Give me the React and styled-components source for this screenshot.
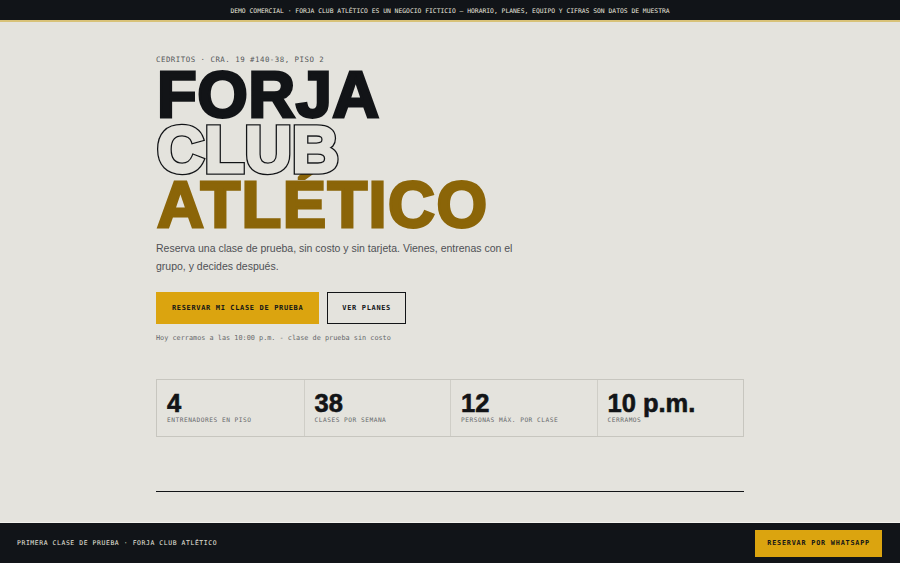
import React from "react"
import styled, { createGlobalStyle } from "styled-components"

const GlobalStyle = createGlobalStyle`
	html, body, #root {
		margin: 0;
		height: 100%;
	}
	body {
		background: #e4e3dd;
		font-family: "Liberation Sans", Arial, sans-serif;
		color: #121417;
	}
	* {
		box-sizing: border-box;
	}
`

const mono = `"DejaVu Sans Mono", "Liberation Mono", monospace`
const paper = "#e4e3dd"
const ink = "#121417"

const PageElement = styled.div`
	height: 100vh;
	display: flex;
	flex-direction: column;
`

const NoticeElement = styled.div`
	height: 22px;
	flex-shrink: 0;
	background: #111418;
	border-bottom: 2px solid #d8c278;
	display: flex;
	align-items: center;
	justify-content: center;
	color: #e8e6df;
	font-family: ${mono};
	font-size: 6.35px;
`

const MainElement = styled.main`
	flex: 1;
	width: 588px;
	margin: 0 auto;
	padding-top: 33px;
	display: flex;
	flex-direction: column;
`

const EyebrowElement = styled.div`
	font-family: ${mono};
	font-size: 7.4px;
	letter-spacing: 0.5px;
	color: #55575a;
	margin-bottom: 3px;
`

const TitleElement = styled.h1`
	margin: 0;
	font-size: 65px;
	font-weight: 700;
	line-height: 55px;
	letter-spacing: 0.5px;
	display: flex;
	flex-direction: column;
	align-items: flex-start;
	padding-left: 1px;
`

const TitleLineElement = styled.span`
	color: ${(props) => props.$color || ink};
	-webkit-text-stroke: 2.8px ${(props) => props.$color || ink};
	letter-spacing: ${(props) => props.$spacing || 0.5}px;
`

const OutlineLineElement = styled.span`
	position: relative;
	color: ${ink};
	-webkit-text-stroke: 5.4px ${ink};

	&::after {
		content: attr(data-text);
		position: absolute;
		left: 0;
		top: 0;
		color: ${paper};
		-webkit-text-stroke: 2.8px ${paper};
	}
`

const LeadElement = styled.p`
	margin: 7px 0 0;
	width: 362px;
	font-size: 10.5px;
	line-height: 18px;
	color: #4f5155;
`

const ActionsElement = styled.div`
	display: flex;
	gap: 8px;
	margin-top: 17px;
`

const ButtonElement = styled.a`
	height: 32px;
	display: flex;
	align-items: center;
	justify-content: center;
	padding: 0 ${(props) => props.$pad || 14}px;
	font-family: ${mono};
	font-size: 7px;
	font-weight: bold;
	letter-spacing: 0.65px;
	color: ${ink};
	background: ${(props) => (props.$primary ? "#dba40f" : "transparent")};
	border: ${(props) => (props.$primary ? "none" : `1.5px solid ${ink}`)};
	text-decoration: none;
`

const NoteElement = styled.div`
	margin-top: 10px;
	font-family: ${mono};
	font-size: 6.85px;
	color: #66686b;
`

const StatsElement = styled.div`
	margin-top: 37px;
	display: grid;
	grid-template-columns: repeat(4, 1fr);
	border: 1px solid #c7c6bf;
	height: 58px;
`

const StatElement = styled.div`
	padding: 10px 10px 0;
	border-left: ${(props) => (props.$first ? "none" : "1px solid #cfcec7")};
`

const StatValueElement = styled.div`
	font-size: 25.5px;
	font-weight: bold;
	line-height: 26px;
	-webkit-text-stroke: 0.6px ${ink};
`

const StatLabelElement = styled.div`
	font-family: ${mono};
	font-size: 6.2px;
	letter-spacing: 0.5px;
	color: #66686b;
`

const RuleElement = styled.hr`
	margin: 54px 0 0;
	border: none;
	border-top: 1.5px solid ${ink};
`

const FooterElement = styled.footer`
	height: 41px;
	flex-shrink: 0;
	background: #111418;
	border-top: 1px solid #f2f1ec;
	display: flex;
	align-items: center;
	justify-content: space-between;
	padding: 0 18px 0 17px;
`

const FooterTextElement = styled.span`
	font-family: ${mono};
	font-size: 6.4px;
	letter-spacing: 0.6px;
	color: #e8e6df;
`

const FooterButtonElement = styled.a`
	height: 27px;
	padding: 0 12px;
	display: flex;
	align-items: center;
	background: #dba40f;
	font-family: ${mono};
	font-size: 6.8px;
	font-weight: bold;
	letter-spacing: 0.8px;
	color: ${ink};
	text-decoration: none;
`

const stats = [
	{ value: "4", label: "ENTRENADORES EN PISO" },
	{ value: "38", label: "CLASES POR SEMANA" },
	{ value: "12", label: "PERSONAS MÁX. POR CLASE" },
	{ value: "10 p.m.", label: "CERRAMOS" },
]

function App() {
	return (
		<PageElement>
			<GlobalStyle />
			<NoticeElement>
				DEMO COMERCIAL · FORJA CLUB ATLÉTICO ES UN NEGOCIO FICTICIO — HORARIO, PLANES, EQUIPO Y CIFRAS SON DATOS DE MUESTRA
			</NoticeElement>
			<MainElement>
				<EyebrowElement>CEDRITOS · CRA. 19 #140-38, PISO 2</EyebrowElement>
				<TitleElement>
					<TitleLineElement>FORJA</TitleLineElement>
					<OutlineLineElement data-text="CLUB">CLUB</OutlineLineElement>
					<TitleLineElement $color="#8b6508" $spacing={1.4}>ATLÉTICO</TitleLineElement>
				</TitleElement>
				<LeadElement>
					Reserva una clase de prueba, sin costo y sin tarjeta. Vienes, entrenas con el grupo, y decides después.
				</LeadElement>
				<ActionsElement>
					<ButtonElement $primary $pad={16}>RESERVAR MI CLASE DE PRUEBA</ButtonElement>
					<ButtonElement>VER PLANES</ButtonElement>
				</ActionsElement>
				<NoteElement>Hoy cerramos a las 10:00 p.m. - clase de prueba sin costo</NoteElement>
				<StatsElement>
					{stats.map((stat, i) => (
						<StatElement key={stat.label} $first={i === 0}>
							<StatValueElement>{stat.value}</StatValueElement>
							<StatLabelElement>{stat.label}</StatLabelElement>
						</StatElement>
					))}
				</StatsElement>
				<RuleElement />
			</MainElement>
			<FooterElement>
				<FooterTextElement>PRIMERA CLASE DE PRUEBA · FORJA CLUB ATLÉTICO</FooterTextElement>
				<FooterButtonElement>RESERVAR POR WHATSAPP</FooterButtonElement>
			</FooterElement>
		</PageElement>
	)
}

export default App
